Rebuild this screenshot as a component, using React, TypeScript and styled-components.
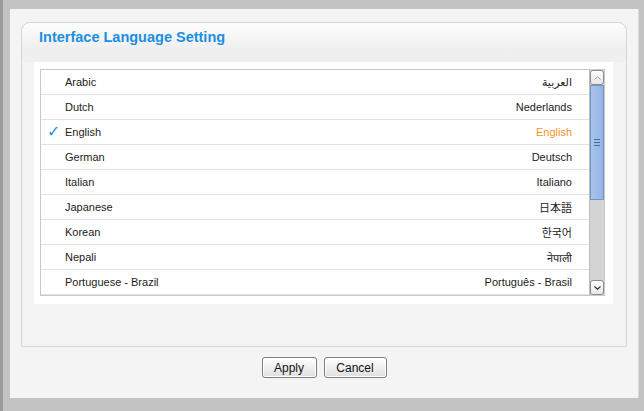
import React from 'react';
import styled, { createGlobalStyle } from 'styled-components';

const GlobalStyle = createGlobalStyle`
  html, body {
    margin: 0;
    padding: 0;
    background: #c3c3c3;
    font-family: "Liberation Sans", Arial, sans-serif;
  }
`;

const Page = styled.div`
  width: 644px;
  height: 411px;
  box-sizing: border-box;
  padding: 9px 5px 13px 7px;
  border-left: 3px solid #9a9a9a;
  overflow: hidden;
`;

const Dialog = styled.div`
  width: 629px;
  height: 389px;
  box-sizing: border-box;
  background: #f4f4f4;
  border-right: 1px solid #d9d9d9;
  padding: 13px 11px 0 11px;
  display: flex;
  flex-direction: column;
`;

const Panel = styled.div`
  height: 325px;
  box-sizing: border-box;
  border: 1px solid #d6d6d6;
  border-radius: 9px 9px 0 0;
  background: #f4f4f4;
  display: flex;
  flex-direction: column;
`;

const Header = styled.div`
  height: 39px;
  box-sizing: border-box;
  padding: 6px 17px 0;
  border-radius: 9px 9px 0 0;
  background: linear-gradient(#fdfdfd, #eeeeee 70%, #f0f0f0);
`;

const Title = styled.h2`
  margin: 0;
  font-size: 14.5px;
  line-height: 17px;
  font-weight: bold;
  color: #1b8fe0;
`;

const ListWrap = styled.div`
  margin: 0 13px 0 12px;
  padding: 7px 8px 8px 6px;
  background: #fff;
`;

const ListBox = styled.div`
  height: 227px;
  box-sizing: border-box;
  border: 1px solid #c8c8c8;
  display: flex;
`;

const Rows = styled.div`
  flex: 1;
  overflow: hidden;
`;

const Row = styled.div`
  height: 25px;
  box-sizing: border-box;
  border-bottom: 1px solid #e2e2e2;
  display: grid;
  grid-template-columns: 24px 1fr auto;
  align-items: center;
  padding-right: 17px;
  font-size: 11px;
  color: #1c1c1c;
`;

const Check = styled.span`
  color: #1e8fd2;
  font-size: 16px;
  line-height: 1;
  padding-left: 6px;
  font-family: "DejaVu Sans", sans-serif;
  font-style: italic;
`;

const Native = styled.span<{ $active?: boolean }>`
  color: ${(p) => (p.$active ? '#f7931e' : '#1c1c1c')};
  font-family: "Liberation Sans", "DejaVu Sans", "Noto Sans CJK JP", sans-serif;
`;

const ScrollBar = styled.div`
  width: 14px;
  display: flex;
  flex-direction: column;
  background: #d4d4d4;
  border-left: 1px solid #bdbdbd;
`;

const ScrollBtn = styled.div`
  height: 15px;
  box-sizing: border-box;
  border: 1px solid #8c8c8c;
  border-radius: 3px;
  background: linear-gradient(#ffffff, #e6e6e6);
  display: flex;
  align-items: center;
  justify-content: center;
`;

const Thumb = styled.div`
  height: 115px;
  box-sizing: border-box;
  border: 1px solid #6f95c9;
  background: linear-gradient(90deg, #a9c4ea, #93b5e4);
  display: flex;
  align-items: center;
  justify-content: center;
`;

const Track = styled.div`
  flex: 1;
`;

const Footer = styled.div`
  display: flex;
  justify-content: center;
  gap: 7px;
  padding-top: 10px;
`;

const Button = styled.button<{ $w: number }>`
  width: ${(p) => p.$w}px;
  height: 21px;
  padding: 0;
  border: 1px solid #7d7d7d;
  border-radius: 3px;
  background: linear-gradient(#ffffff, #f0f0f0 50%, #dedede);
  box-shadow: inset 0 0 0 1px #fff;
  font-family: "Liberation Sans", Arial, sans-serif;
  font-size: 12px;
  color: #111;
`;

const languages = [
  { name: 'Arabic', native: 'العربية' },
  { name: 'Dutch', native: 'Nederlands' },
  { name: 'English', native: 'English' },
  { name: 'German', native: 'Deutsch' },
  { name: 'Italian', native: 'Italiano' },
  { name: 'Japanese', native: '日本語' },
  { name: 'Korean', native: '한국어' },
  { name: 'Nepali', native: 'नेपाली' },
  { name: 'Portuguese - Brazil', native: 'Português - Brasil' },
];

const selected = 'English';

export default function App() {
  return (
    <>
      <GlobalStyle />
      <Page>
        <Dialog>
          <Panel>
            <Header>
              <Title>Interface Language Setting</Title>
            </Header>
            <ListWrap>
              <ListBox>
                <Rows>
                  {languages.map((l) => (
                    <Row key={l.name}>
                      {l.name === selected ? <Check>✓</Check> : <span />}
                      <span>{l.name}</span>
                      <Native $active={l.name === selected}>{l.native}</Native>
                    </Row>
                  ))}
                </Rows>
                <ScrollBar>
                  <ScrollBtn>
                    <svg width="7" height="4" viewBox="0 0 7 4">
                      <path d="M0.5 3.5 L3.5 0.8 L6.5 3.5" fill="none" stroke="#9a9a9a" strokeWidth="1" />
                    </svg>
                  </ScrollBtn>
                  <Thumb>
                    <svg width="6" height="7" viewBox="0 0 6 7">
                      <path d="M0 0.5h6M0 3.5h6M0 6.5h6" stroke="#4d6f9f" strokeWidth="1" />
                    </svg>
                  </Thumb>
                  <Track />
                  <ScrollBtn>
                    <svg width="7" height="4" viewBox="0 0 7 4">
                      <path d="M0.5 0.5 L3.5 3.2 L6.5 0.5" fill="none" stroke="#333" strokeWidth="1.2" />
                    </svg>
                  </ScrollBtn>
                </ScrollBar>
              </ListBox>
            </ListWrap>
          </Panel>
          <Footer>
            <Button $w={55}>Apply</Button>
            <Button $w={63}>Cancel</Button>
          </Footer>
        </Dialog>
      </Page>
    </>
  );
}
